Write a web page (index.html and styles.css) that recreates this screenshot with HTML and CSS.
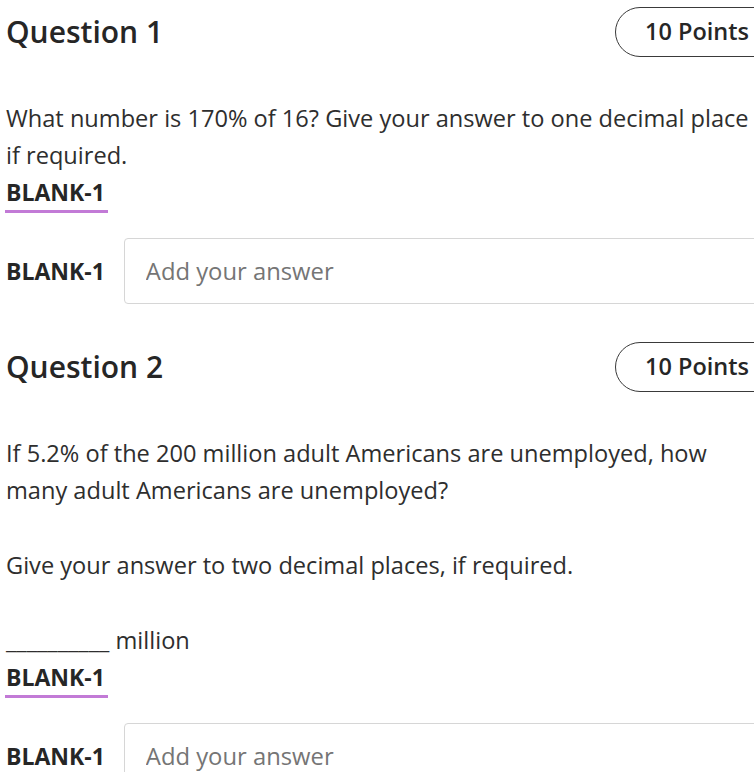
FILE: index.html
```html
<!DOCTYPE html>
<html lang="en">
<head>
<meta charset="utf-8">
<title>Questions</title>
<link rel="stylesheet" href="styles.css">
</head>
<body>
<main class="page">
  <section class="question q1">
    <header class="q-header">
      <h2 class="q-title">Question 1</h2>
      <span class="points">10 Points</span>
    </header>
    <div class="q-body">
      <p>What number is 170% of 16? Give your answer to one decimal place if required.</p>
    </div>
    <div class="blank-tab"><span>BLANK-1</span></div>
    <div class="answer-row">
      <label class="answer-label" for="a1">BLANK-1</label>
      <input class="answer-input" id="a1" type="text" placeholder="Add your answer">
    </div>
  </section>

  <section class="question q2">
    <header class="q-header">
      <h2 class="q-title">Question 2</h2>
      <span class="points">10 Points</span>
    </header>
    <div class="q-body">
      <p>If 5.2% of the 200 million adult Americans are unemployed, how many adult Americans are unemployed?</p>
      <p>Give your answer to two decimal places, if required.</p>
      <p>__________ million</p>
    </div>
    <div class="blank-tab"><span>BLANK-1</span></div>
    <div class="answer-row">
      <label class="answer-label" for="a2">BLANK-1</label>
      <input class="answer-input" id="a2" type="text" placeholder="Add your answer">
    </div>
  </section>
</main>
</body>
</html>
```

FILE: styles.css
```css
html, body {
  margin: 0;
  padding: 0;
  overflow: hidden;
  background: #ffffff;
}

body {
  font-family: "Open Sans", "Noto Sans", "Liberation Sans", sans-serif;
  color: #262626;
}

.page {
  width: 756px;
  padding: 7px 0 0 6px;
  display: flex;
  flex-direction: column;
  gap: 38px;
}

.q-header {
  display: flex;
  align-items: center;
  justify-content: space-between;
  height: 50px;
}

.q-title {
  margin: 0;
  font-size: 30px;
  font-weight: 600;
  line-height: 40px;
  color: #262626;
}

.points {
  box-sizing: border-box;
  height: 50px;
  width: 175px;
  margin-right: -28px;
  padding: 0 0 0 29px;
  border: 1.3px solid #3a3a3a;
  border-radius: 25px;
  font-size: 23.5px;
  font-weight: 600;
  line-height: 47px;
  color: #262626;
}

.q-body {
  margin-top: 43px;
  font-size: 23.6px;
  line-height: 37px;
  color: #2e2e2e;
}

.q-body p {
  margin: 0;
}

.q-body p + p {
  margin-top: 38px;
}

.blank-tab {
  margin-left: -1px;
}

.blank-tab span {
  display: inline-block;
  padding: 0 3px 0 1px;
  font-size: 23px;
  font-weight: 700;
  line-height: 36px;
  border-bottom: 3px solid #c27ad6;
  color: #262626;
}

.answer-row {
  display: flex;
  align-items: center;
  gap: 19px;
  margin-top: 25px;
  margin-right: -30px;
}

.answer-label {
  font-size: 23px;
  font-weight: 700;
  color: #262626;
}

.answer-input {
  flex: 1;
  box-sizing: border-box;
  height: 66px;
  padding: 0 0 0 21px;
  border: 1px solid #d6d6d6;
  border-radius: 4px;
  font-family: "Open Sans", "Noto Sans", "Liberation Sans", sans-serif;
  font-size: 23.8px;
  color: #262626;
  background: #ffffff;
  outline: none;
}

.answer-input::placeholder {
  color: #757575;
}
```
